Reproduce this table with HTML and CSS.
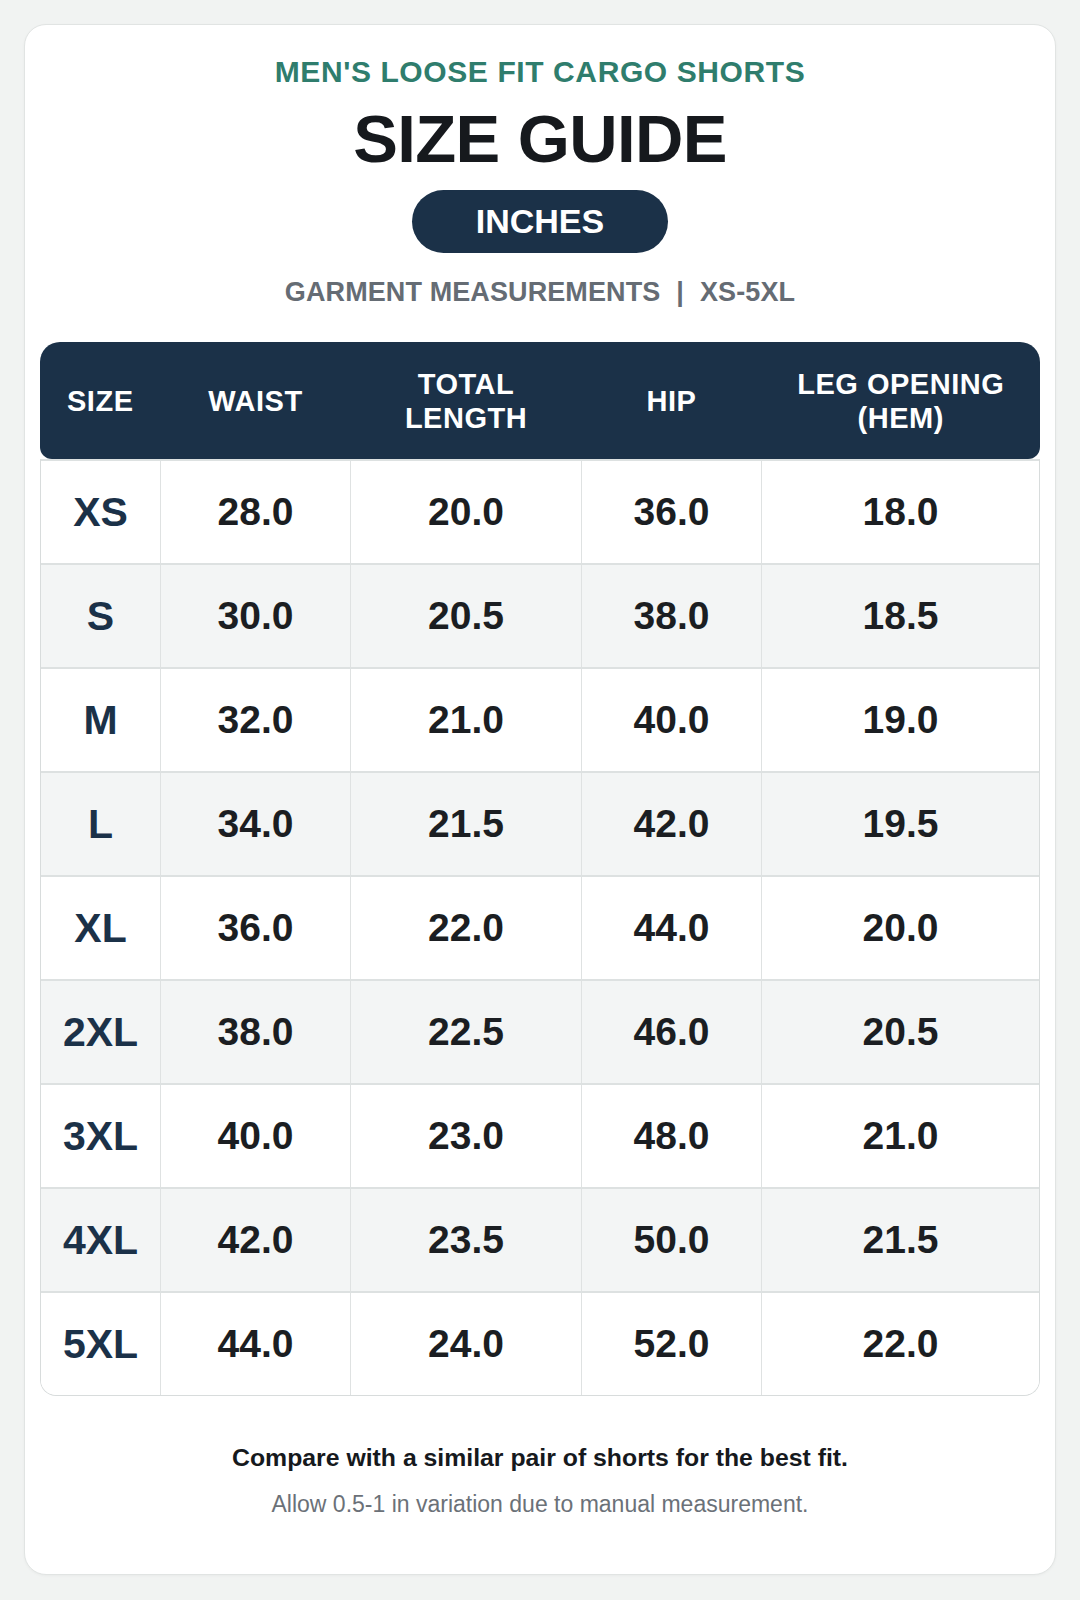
FILE: index.html
```html
<!DOCTYPE html>
<html lang="en">
<head>
<meta charset="utf-8">
<title>Size Guide</title>
<link rel="stylesheet" href="styles.css">
</head>
<body>
<div class="card">
  <div class="eyebrow">MEN'S LOOSE FIT CARGO SHORTS</div>
  <h1 class="title">SIZE GUIDE</h1>
  <div class="pill-wrap"><span class="pill">INCHES</span></div>
  <div class="meta">GARMENT MEASUREMENTS<span class="sep">|</span>XS-5XL</div>

  <div class="table">
    <div class="thead">
      <div class="th">SIZE</div>
      <div class="th">WAIST</div>
      <div class="th">TOTAL<br>LENGTH</div>
      <div class="th">HIP</div>
      <div class="th">LEG OPENING<br>(HEM)</div>
    </div>
    <div class="tbody">
      <div class="row"><div class="cell size">XS</div><div class="cell">28.0</div><div class="cell">20.0</div><div class="cell">36.0</div><div class="cell">18.0</div></div>
      <div class="row alt"><div class="cell size">S</div><div class="cell">30.0</div><div class="cell">20.5</div><div class="cell">38.0</div><div class="cell">18.5</div></div>
      <div class="row"><div class="cell size">M</div><div class="cell">32.0</div><div class="cell">21.0</div><div class="cell">40.0</div><div class="cell">19.0</div></div>
      <div class="row alt"><div class="cell size">L</div><div class="cell">34.0</div><div class="cell">21.5</div><div class="cell">42.0</div><div class="cell">19.5</div></div>
      <div class="row"><div class="cell size">XL</div><div class="cell">36.0</div><div class="cell">22.0</div><div class="cell">44.0</div><div class="cell">20.0</div></div>
      <div class="row alt"><div class="cell size">2XL</div><div class="cell">38.0</div><div class="cell">22.5</div><div class="cell">46.0</div><div class="cell">20.5</div></div>
      <div class="row"><div class="cell size">3XL</div><div class="cell">40.0</div><div class="cell">23.0</div><div class="cell">48.0</div><div class="cell">21.0</div></div>
      <div class="row alt"><div class="cell size">4XL</div><div class="cell">42.0</div><div class="cell">23.5</div><div class="cell">50.0</div><div class="cell">21.5</div></div>
      <div class="row last"><div class="cell size">5XL</div><div class="cell">44.0</div><div class="cell">24.0</div><div class="cell">52.0</div><div class="cell">22.0</div></div>
    </div>
  </div>

  <p class="note">Compare with a similar pair of shorts for the best fit.</p>
  <p class="sub-note">Allow 0.5-1 in variation due to manual measurement.</p>
</div>
</body>
</html>
```

FILE: styles.css
```css
* { box-sizing: border-box; }

html, body {
  margin: 0;
  padding: 0;
}

body {
  background: #f1f3f2;
  padding: 24px;
  font-family: "Liberation Sans", Arial, Helvetica, sans-serif;
  color: #17191d;
}

.card {
  background: #ffffff;
  border: 1px solid #e1e4e3;
  border-radius: 22px;
  box-shadow: 0 1px 3px rgba(0, 0, 0, 0.04);
  padding: 32px 15px 58px;
  text-align: center;
}

.eyebrow {
  font-size: 30px;
  line-height: 1;
  font-weight: 700;
  letter-spacing: 0.6px;
  color: #2f7d6d;
}

.title {
  margin: 18px 0 0;
  font-size: 67px;
  line-height: 1;
  font-weight: 700;
  letter-spacing: -0.6px;
  color: #16191d;
}

.pill-wrap {
  margin-top: 18px;
  display: flex;
  justify-content: center;
}

.pill {
  display: block;
  width: 256px;
  height: 63px;
  line-height: 63px;
  border-radius: 32px;
  background: #1b3148;
  color: #ffffff;
  font-size: 34px;
  font-weight: 700;
}

.meta {
  margin-top: 26px;
  font-size: 27px;
  line-height: 1;
  font-weight: 700;
  letter-spacing: 0.1px;
  color: #656c74;
}

.sep {
  margin: 0 16px;
}

.table {
  margin-top: 36px;
}

.thead {
  display: grid;
  grid-template-columns: 120.5px 190px 231px 180px 1fr;
  height: 117px;
  padding-top: 3px;
  background: #1b3148;
  border-radius: 20px 20px 12px 12px;
  color: #ffffff;
}

.th {
  display: flex;
  align-items: center;
  justify-content: center;
  font-size: 29px;
  line-height: 1.16;
  font-weight: 700;
  letter-spacing: 0.5px;
}

.tbody {
  border: 1.5px solid #d8dcdc;
  border-top: 2px solid #dde1e1;
  border-radius: 0 0 16px 16px;
  overflow: hidden;
}

.row {
  display: grid;
  grid-template-columns: 119px 190px 231px 180px 1fr;
  height: 104px;
  border-bottom: 2px solid #dde1e1;
  background: #ffffff;
}

.row.alt {
  background: #f3f5f5;
}

.row.last {
  border-bottom: 0;
  height: 102px;
}

.cell {
  display: flex;
  align-items: center;
  justify-content: center;
  font-size: 39px;
  font-weight: 700;
  color: #1b1e22;
  border-left: 1px solid #dfe2e2;
}

.cell:first-child {
  border-left: 0;
}

.cell.size {
  font-size: 41px;
  color: #1b3148;
}

.note {
  margin: 50px 0 0;
  font-size: 24.8px;
  line-height: 1;
  font-weight: 700;
  color: #16191d;
}

.sub-note {
  margin: 22px 0 0;
  font-size: 23px;
  line-height: 1;
  font-weight: 400;
  color: #6b7178;
}
```
